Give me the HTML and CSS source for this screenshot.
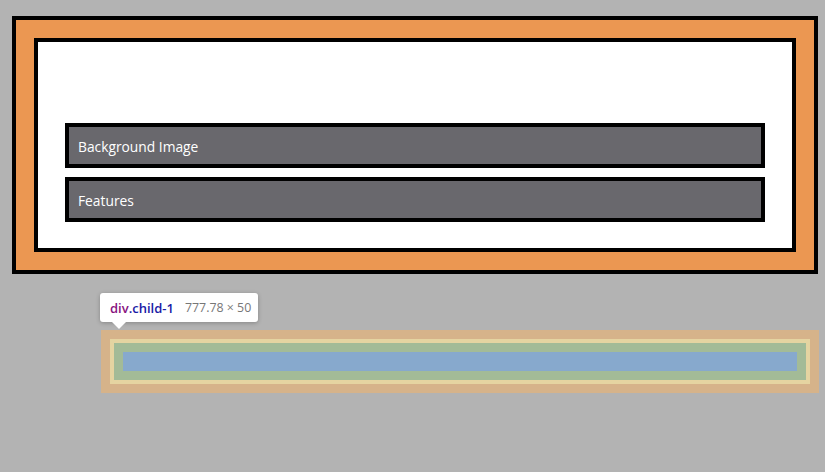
FILE: index.html
```html
<!DOCTYPE html>
<html>
<head>
<meta charset="utf-8">
<link rel="stylesheet" href="styles.css">
</head>
<body>
<div class="outer">
  <div class="inner">
    <div class="child">Background Image</div>
    <div class="child">Features</div>
  </div>
</div>
<div class="inspect">
  <div class="tip"><span class="tag">div</span><span class="cls">.child-1</span><span class="dims">777.78 × 50</span></div>
  <div class="hl-margin">
    <div class="hl-border">
      <div class="hl-padding">
        <div class="hl-content"></div>
      </div>
    </div>
  </div>
</div>
</body>
</html>
```
FILE: styles.css
```css
* { box-sizing: border-box; }
html, body { margin: 0; padding: 0; }
body {
  background: #b3b3b3;
  width: 825px;
  height: 472px;
  overflow: hidden;
  padding-top: 16px;
  font-family: "Open Sans", "Noto Sans", sans-serif;
}
.outer {
  margin-left: 12px;
  width: 806px;
  height: 258px;
  border: 4px solid #000;
  background: #eb9752;
  padding: 18px;
}
.inner {
  height: 214px;
  border: 4px solid #000;
  background: #fff;
  padding: 81px 27px 26px 27px;
  display: flex;
  flex-direction: column;
  gap: 9px;
}
.child {
  height: 45px;
  border: 4px solid #000;
  background: #69686d;
  color: #fff;
  font-size: 13.8px;
  padding-left: 9px;
  padding-top: 2px;
  display: flex;
  align-items: center;
}
.inspect {
  margin-top: 19px;
  margin-left: 100px;
}
.tip {
  position: relative;
  width: 158px;
  height: 29px;
  background: #fff;
  border-radius: 3px;
  box-shadow: 0 1px 4px rgba(0,0,0,0.25);
  display: flex;
  align-items: center;
  padding-left: 10px;
  font-size: 13px;
}
.tip::after {
  content: "";
  position: absolute;
  left: 12px;
  bottom: -7px;
  border-left: 7px solid transparent;
  border-right: 7px solid transparent;
  border-top: 7px solid #fff;
}
.tag { color: #881280; font-weight: 600; }
.cls { color: #1a1aa6; font-weight: 600; }
.dims { color: #777; margin-left: 11px; font-size: 12.4px; }
.hl-margin {
  margin-top: 8px;
  margin-left: 1px;
  width: 718px;
  height: 63px;
  background: #d6b38a;
  padding: 9px;
}
.hl-border {
  height: 45px;
  width: 700px;
  background: #e5d4a1;
  padding: 4px;
}
.hl-padding {
  height: 37px;
  background: #a3bb97;
  padding: 9px;
}
.hl-content {
  height: 19px;
  background: #87a9cd;
}
```
